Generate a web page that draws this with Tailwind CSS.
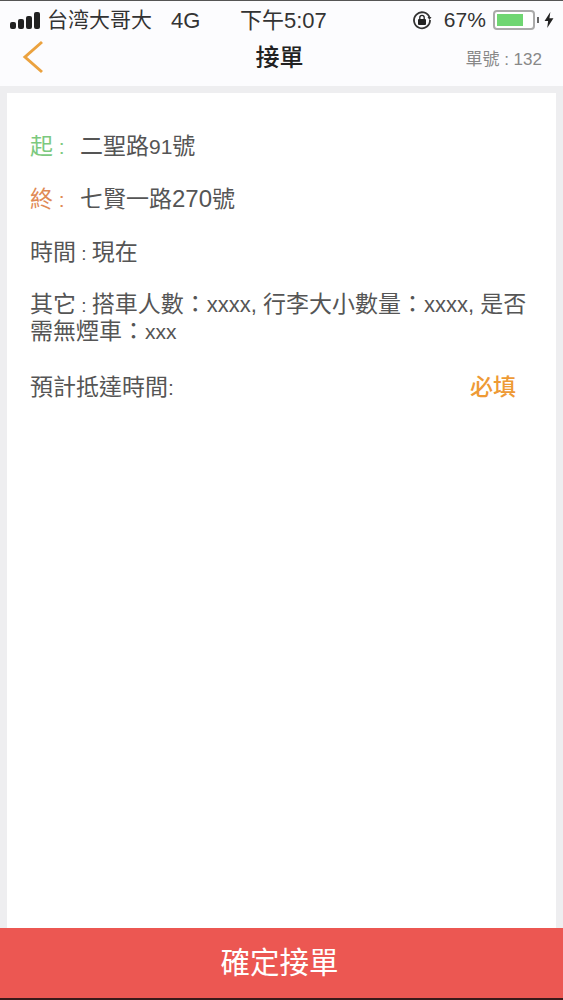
<!DOCTYPE html>
<html lang="zh-Hant">
<head>
    <meta charset="UTF-8">
    <meta name="viewport" content="width=device-width, initial-scale=1.0">
    <title>接單</title>
    <script src="https://cdn.jsdelivr.net/npm/@tailwindcss/browser@4"></script>
</head>
<body class="bg-[#eeeef0] font-['Liberation_Sans','Noto_Sans_CJK_TC',sans-serif]">
    <div class="w-[563px] h-[1000px] flex flex-col overflow-hidden border-t border-[#555]">
        <!-- status bar -->
        <div class="h-[38px] bg-[#fcfcfe] flex items-center pl-[10px] text-[#333] text-[22px]">
            <div class="flex gap-[2px] w-[30px] h-[17px] items-end">
                <span class="w-[6px] h-[7px] bg-[#222] rounded-[2px]"></span>
                <span class="w-[6px] h-[10px] bg-[#222] rounded-[2px]"></span>
                <span class="w-[6px] h-[13px] bg-[#222] rounded-[2px]"></span>
                <span class="w-[6px] h-[17px] bg-[#222] rounded-[2px]"></span>
            </div>
            <span class="ml-[7px] w-[124px] whitespace-nowrap text-[21px]">台湾大哥大</span>
            <span class="w-[69px]">4G</span>
            <span class="whitespace-nowrap">下午5:07</span>
            <div class="flex items-center ml-[84px]">
                <svg class="w-[22px] h-[22px]" viewBox="0 0 22 22" fill="none">
                    <path d="M18.5 8.5A8 8 0 1 0 19 11" stroke="#333" stroke-width="1.8"/>
                    <path d="M16.5 8h4l-2 3z" fill="#333"/>
                    <rect x="7" y="10" width="8" height="6" rx="1" fill="#222"/>
                    <path d="M8.8 10V8.5a2.2 2.2 0 0 1 4.4 0V10" stroke="#222" stroke-width="1.3"/>
                </svg>
                <span class="ml-[11px] text-[21px]">67%</span>
                <div class="ml-[7px] w-[42px] h-[20px] border-2 border-[#aaa] rounded-[4px] p-[2px] bg-white">
                    <div class="w-[26px] h-full bg-[#6fd672]"></div>
                </div>
                <span class="w-[2px] h-[6px] ml-[2px] bg-[#666]"></span>
                <svg class="w-[10px] h-[16px] ml-[5px]" viewBox="0 0 10 18">
                    <path d="M6.5 0L0 10h4l-1 8 7-11H5.5z" fill="#222"/>
                </svg>
            </div>
        </div>
        <!-- nav bar -->
        <div class="h-[47px] bg-[#fcfcfe] relative flex items-center justify-center">
            <svg class="absolute left-[22px] top-[1px] w-[23px] h-[34px]" viewBox="0 0 23 34" fill="none">
                <path d="M20 2L3 17l17 15" stroke="#eba23f" stroke-width="3"/>
            </svg>
            <span class="text-[24px] font-medium text-[#222] mt-[-10px] mr-[4px]">接單</span>
            <span class="absolute right-[21px] top-[8px] text-[17px] text-[#888]">單號 : 132</span>
        </div>
        <!-- content card -->
        <div class="flex-1 pt-[7px] px-[7px]">
            <div class="bg-white h-full px-[23px] pt-[39px] text-[23px] leading-[28px] text-[#555]">
                <div class="flex">
                    <span class="w-[50px] text-[#7cc97e]">起<span class="text-[21px] leading-none"> :</span></span>
                    <span>二聖路<span class="text-[21px] leading-none">91</span>號</span>
                </div>
                <div class="flex mt-[25px]">
                    <span class="w-[50px] text-[#df8a55]">終<span class="text-[21px] leading-none"> :</span></span>
                    <span>七賢一路<span class="text-[24px] leading-none">270</span>號</span>
                </div>
                <div class="mt-[25px]">時間<span class="text-[19px] leading-none"> : </span>現在</div>
                <div class="mt-[25px] leading-[27px]">其它<span class="text-[19px] leading-none"> : </span>搭車人數：<span class="text-[22px] leading-none">xxxx, </span>行李大小數量：<span class="text-[22px] leading-none">xxxx, </span>是否<br>需無煙車：<span class="text-[21px] leading-none">xxx</span></div>
                <div class="flex justify-between mt-[28px] pr-[17px]">
                    <span>預計抵達時間<span class="text-[21px] leading-none">:</span></span>
                    <span class="text-[#ee9a35] font-medium">必填</span>
                </div>
            </div>
        </div>
        <!-- confirm button -->
        <button class="h-[70px] shrink-0 bg-[#ec5752] text-white text-[29.5px] pr-[4px] pt-[1px]">確定接單</button>
        <div class="h-[2px] shrink-0 bg-[#3a1a1a]"></div>
    </div>
</body>
</html>
